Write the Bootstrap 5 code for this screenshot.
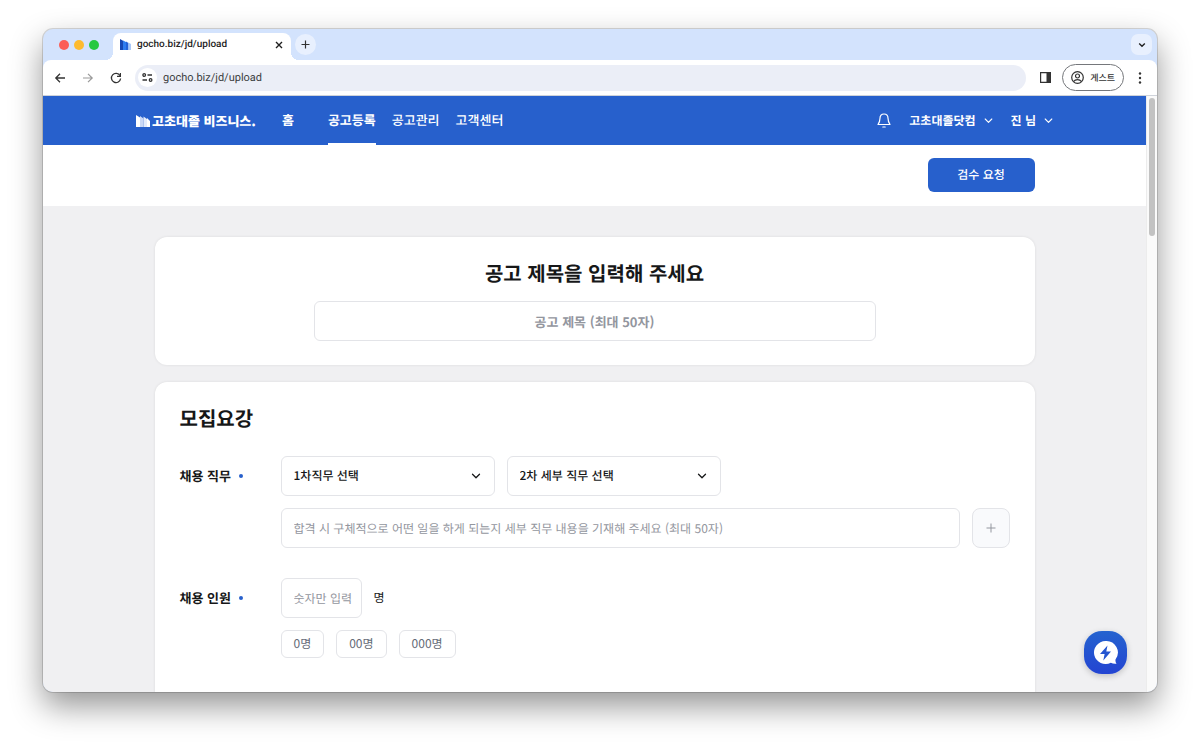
<!DOCTYPE html>
<html lang="ko">
<head>
  <meta charset="UTF-8" />
  <meta name="viewport" content="width=device-width, initial-scale=1.0"/>
  <title>고초대졸 비즈니스 - 공고등록</title>
  <link href="https://cdn.jsdelivr.net/npm/bootstrap@5.3.3/dist/css/bootstrap.min.css" rel="stylesheet" />
  <style>
    :root {
      --brand: #2760cc;
      --line: #e3e4e8;
      --hint: #93969e;
      --ink: #161718;
    }
    body {
      font-family: "Noto Sans CJK KR", sans-serif;
      font-size: 12px;
      line-height: 20px;
      color: var(--ink);
      background: #fff;
      padding: 29px 43px 57px;
      height: 100vh;
      overflow: hidden;
      text-rendering: geometricPrecision;
    }
    svg { display: block; flex: none; }
    button, input, select { line-height: inherit; text-rendering: inherit; }

    /* browser */
    .browser {
      height: 100%;
      border-radius: 10px;
      box-shadow: 0 0 0 1px rgba(0,0,0,.14), 0 14px 32px rgba(0,0,0,.42);
      background: #d3e3fd;
    }
    .tabs { height: 31px; padding: 0 5px 0 16px; }
    .dots { gap: 5px; margin-right: 14px; }
    .dot { width: 10px; height: 10px; border-radius: 50%; }
    .dot-red { background: #fb5d57; }
    .dot-yellow { background: #fdbb2f; }
    .dot-green { background: #27c840; }
    .tab {
      width: 178px;
      height: 27px;
      padding: 0 8px 4px 7px;
      background: #fff;
      border-radius: 8px 8px 0 0;
      font: 500 10px/16px Roboto, "Liberation Sans", sans-serif;
      color: #1f1f1f;
    }
    .tab .favicon { margin-right: 6px; }
    .tab::before, .tab::after {
      content: "";
      position: absolute;
      bottom: 0;
      width: 8px;
      height: 8px;
    }
    .tab::before { left: -8px; background: radial-gradient(circle at 0 0, transparent 8px, #fff 8px); }
    .tab::after { right: -8px; background: radial-gradient(circle at 100% 0, transparent 8px, #fff 8px); }
    .plain { border: 0; background: none; padding: 0; gap: 8px; font-weight: 700; }
    .round-btn {
      width: 21px;
      height: 21px;
      border-radius: 50%;
      background: #e8f0fe;
    }
    .round-btn.squared { border-radius: 7px; }
    .toolbar {
      height: 36px;
      padding: 0 12px 0 11px;
      background: #fff;
      border-radius: 8px 8px 0 0;
      border-bottom: 1px solid #cfd3da;
    }
    .address {
      height: 26px;
      border-radius: 13px;
      background: #ebeef7;
      padding-left: 3px;
      gap: 6px;
      margin: 0 14px 0 13px;
    }
    .address input {
      border: 0;
      background: none;
      padding: 0;
      outline: 0;
      font: 11px/16px Roboto, "Liberation Sans", sans-serif;
      color: #3c3e42;
    }
    .site-info { width: 19px; height: 19px; border-radius: 50%; background: #fff; }
    .guest {
      height: 27px;
      width: 62px;
      padding: 0 8px;
      margin: 0 11px;
      border: 1px solid #75777b;
      border-radius: 14px;
      background: #fff;
      font-size: 9px;
      font-weight: 500;
      color: #333;
    }
    .scroll-track { width: 11px; background: #fafafa; border-left: 1px solid #ececec; padding: 2px; }
    .scroll-thumb { width: 6px; height: 138px; border-radius: 3px; background: #c2c2c2; }

    /* site */
    .page { background: #f0f0f2; }
    .site-header { background: var(--brand); }
    .header-inner { max-width: 917px; height: 49px; }
    .site-header a, .site-header button { color: #fff; text-decoration: none; }
    .brand { font-size: 13px; font-weight: 900; gap: 2px; margin-right: 26px; }
    .menu { font-size: 13px; font-weight: 500; gap: 16px; }
    .menu a { line-height: 46px; border-bottom: 2px solid transparent; border-top: 1px solid transparent; }
    .menu a.home { margin-right: 18px; font-weight: 700; }
    .menu a.active { font-weight: 700; border-bottom-color: #fff; }
    .account { gap: 18px; font-weight: 700; }
    .action-bar { background: #fff; padding: 13px 0 14px; }
    .content-inner { max-width: 880px; }
    .panels { gap: 17px; padding-top: 31px; }
    .submit {
      width: 107px;
      height: 34px;
      border: 0;
      border-radius: 6px;
      background: var(--brand);
      color: #fff;
      font-weight: 500;
    }
    .panel {
      background: #fff;
      border-radius: 12px;
      padding: 24px 25px;
      box-shadow: 0 0 3px rgba(0,0,0,.09);
    }
    .panel h1, .panel h2 { font-size: 20px; line-height: 24px; font-weight: 700; margin: 0; }
    .panel h1 { margin-bottom: 16px; }
    .panel h2 { margin-bottom: 26px; }
    .panel h1 label { display: block; }
    .field {
      height: 40px;
      padding: 0 12px;
      border: 1px solid var(--line);
      border-radius: 6px;
      background-color: #fff;
      color: var(--ink);
      font-size: 12px;
      line-height: 20px;
    }
    .field::placeholder { color: var(--hint); opacity: 1; }
    .title-field { max-width: 562px; font-size: 13px; font-weight: 700; text-align: center; }
    .pick {
      width: 214px;
      font-weight: 500;
      background-size: 10px 10px;
      background-position: right 13px center;
      background-image: url("data:image/svg+xml,%3csvg xmlns='http://www.w3.org/2000/svg' viewBox='0 0 10 10'%3e%3cpath fill='none' stroke='%23161718' stroke-width='1.3' stroke-linecap='round' stroke-linejoin='round' d='M1.5 3.3l3.5 3.5 3.5-3.5'/%3e%3c/svg%3e");
    }
    .form-row { display: grid; grid-template-columns: 101px 1fr; margin-bottom: 30px; }
    .form-row > .row-title { height: 40px; gap: 8px; font-size: 13px; font-weight: 700; }
    .required { width: 4px; height: 4px; border-radius: 50%; background: var(--brand); }
    .fields { gap: 12px; }
    .add {
      width: 38px;
      height: 40px;
      border: 1px solid var(--line);
      border-radius: 8px;
      background: #f9fafc;
    }
    .count { width: 81px; padding-right: 0; }
    .pill {
      height: 28px;
      padding: 0 12px;
      border: 1px solid var(--line);
      border-radius: 6px;
      background: #fff;
      color: #666c78;
    }
    .chat {
      position: absolute;
      right: 30px;
      bottom: 18px;
      width: 43px;
      height: 43px;
      border: 0;
      border-radius: 18px;
      background: linear-gradient(#2563cf, #2344d2);
      box-shadow: 0 2px 6px rgba(0,0,0,.2);
    }
  </style>
</head>
<body>
  <div class="browser d-flex flex-column overflow-hidden position-relative">
    <div class="tabs d-flex flex-shrink-0 align-items-center">
      <div class="dots d-flex">
        <span class="dot dot-red"></span>
        <span class="dot dot-yellow"></span>
        <span class="dot dot-green"></span>
      </div>
      <div class="tab position-relative d-flex align-items-center align-self-end">
        <svg class="favicon" width="11" height="11" viewBox="0 0 11 11">
          <path fill="#1748b4" d="M0 0l3.500 2v9H0z"/>
          <path fill="#2f7df0" d="M3 1.500L6 3v8H3z"/>
          <path fill="#2563d8" d="M6 2.500l2.500 1.500V11H6z"/>
          <path fill="#a9c8f8" d="M8.500 3.500L11 5v6H8.500z"/>
        </svg>
        <span>gocho.biz/jd/upload</span>
        <button class="plain ms-auto" aria-label="탭 닫기">
          <svg width="8" height="8" viewBox="0 0 8 8"><path stroke="#1f1f1f" stroke-width="1.400" d="M1 1l6 6M7 1L1 7"/></svg>
        </button>
      </div>
      <button class="plain round-btn d-flex align-items-center justify-content-center ms-1" aria-label="새 탭">
        <svg width="9" height="9" viewBox="0 0 9 9"><path stroke="#333" stroke-width="1.200" d="M4.500 0.500v8M0.500 4.500h8"/></svg>
      </button>
      <button class="plain round-btn squared d-flex align-items-center justify-content-center ms-auto" aria-label="탭 검색">
        <svg width="8" height="8" viewBox="0 0 8 8"><path fill="none" stroke="#222" stroke-width="1.400" d="M1.200 2.500L4 5.300l2.800-2.800"/></svg>
      </button>
    </div>

    <div class="toolbar d-flex flex-shrink-0 align-items-center">
      <button class="plain" aria-label="뒤로">
        <svg width="12" height="12" viewBox="0 0 12 12"><path fill="none" stroke="#333" stroke-width="1.300" d="M11 6H2M6 1.800L1.800 6 6 10.200"/></svg>
      </button>
      <button class="plain ms-3" aria-label="앞으로">
        <svg width="12" height="12" viewBox="0 0 12 12"><path fill="none" stroke="#999" stroke-width="1.200" d="M1 6h9M6 1.800L10.200 6 6 10.200"/></svg>
      </button>
      <button class="plain ms-3" aria-label="새로고침">
        <svg width="12" height="12" viewBox="0 0 12 12"><path fill="none" stroke="#333" stroke-width="1.300" d="M10 3.600A4.600 4.600 0 1 0 10.600 6.500"/><path fill="#333" d="M11 1v4H7V3.800h2.800V1z"/></svg>
      </button>
      <div class="address flex-grow-1 d-flex align-items-center">
        <span class="site-info d-flex align-items-center justify-content-center">
          <svg width="11" height="9" viewBox="0 0 11 9" fill="none" stroke="#333" stroke-width="1.300"><circle cx="2.200" cy="2" r="1.300"/><path d="M5.500 2H10M0.500 7H5"/><circle cx="8.600" cy="7" r="1.300"/></svg>
        </span>
        <input type="text" class="flex-grow-1" value="gocho.biz/jd/upload" aria-label="주소">
      </div>
      <button class="plain" aria-label="사이드 패널">
        <svg width="11" height="11" viewBox="0 0 11 11"><path fill="none" stroke="#333" stroke-width="1.200" d="M.6.600h9.800v9.800H.6z"/><path fill="#333" d="M6.500.600h4v9.800h-4z"/></svg>
      </button>
      <button class="guest d-flex align-items-center justify-content-between">
        <svg width="13" height="13" viewBox="0 0 13 13" fill="none" stroke="#333" stroke-width="1.200"><circle cx="6.500" cy="6.500" r="5.800"/><circle cx="6.500" cy="5" r="2"/><path d="M2.600 10.500c1.800-2.400 6-2.400 7.800 0"/></svg>
        게스트
      </button>
      <button class="plain" aria-label="메뉴">
        <svg width="10" height="12" viewBox="0 0 10 12" fill="#333"><circle cx="5" cy="1.500" r="1.200"/><circle cx="5" cy="6" r="1.200"/><circle cx="5" cy="10.500" r="1.200"/></svg>
      </button>
    </div>

    <div class="d-flex flex-grow-1 overflow-hidden">
      <div class="page flex-grow-1 overflow-hidden">
        <header class="site-header">
          <div class="header-inner mx-auto d-flex align-items-center">
            <a href="#" class="brand d-flex align-items-center">
              <svg width="14" height="12" viewBox="0 0 14 12">
                <path fill="#fff" d="M0 0l4 2.500V12H0z"/>
                <path fill="#c9d8f6" d="M4 1l3.500 2.500V12H4z"/>
                <path fill="#e3ebfb" d="M7.500 1.500L11 4v8H7.500z"/>
                <path fill="#fff" d="M11 3l3 3v6h-3z"/>
              </svg>
              고초대졸 비즈니스.
            </a>
            <nav class="menu d-flex">
              <a href="#" class="home">홈</a>
              <a href="#" class="active">공고등록</a>
              <a href="#">공고관리</a>
              <a href="#">고객센터</a>
            </nav>
            <div class="account d-flex align-items-center ms-auto">
              <button class="plain" aria-label="알림">
                <svg width="14" height="15" viewBox="0 0 14 15" fill="none" stroke="#fff" stroke-width="1.200" stroke-linejoin="round" stroke-linecap="round"><path d="M7 1C4.500 1 3 2.800 3 5.200c0 3-.6 4.200-2 6.300h12c-1.400-2.100-2-3.300-2-6.300C11 2.800 9.500 1 7 1z"/><path d="M5.800 14h2.400"/></svg>
              </button>
              <button class="plain d-flex align-items-center">고초대졸닷컴
                <svg width="9" height="9" viewBox="0 0 9 9"><path fill="none" stroke="#fff" stroke-width="1.100" stroke-linecap="round" stroke-linejoin="round" d="M1.200 3l3.300 3.300L7.800 3"/></svg>
              </button>
              <button class="plain d-flex align-items-center">진 님
                <svg width="9" height="9" viewBox="0 0 9 9"><path fill="none" stroke="#fff" stroke-width="1.100" stroke-linecap="round" stroke-linejoin="round" d="M1.200 3l3.300 3.300L7.800 3"/></svg>
              </button>
            </div>
          </div>
        </header>

        <div class="action-bar">
          <div class="content-inner mx-auto d-flex justify-content-end">
            <button class="submit">검수 요청</button>
          </div>
        </div>

        <main class="content-inner panels mx-auto d-flex flex-column">
          <section class="panel text-center">
            <h1><label for="jobTitle">공고 제목을 입력해 주세요</label></h1>
            <input type="text" id="jobTitle" class="field title-field form-control mx-auto" placeholder="공고 제목 (최대 50자)">
          </section>

          <section class="panel">
            <h2>모집요강</h2>
            <div class="form-row">
              <label for="task1" class="row-title d-flex align-items-center">채용 직무 <span class="required"></span></label>
              <div class="fields d-flex flex-column">
                <div class="fields d-flex">
                  <select id="task1" class="field pick form-select"><option>1차직무 선택</option></select>
                  <select class="field pick form-select" aria-label="2차 직무"><option>2차 세부 직무 선택</option></select>
                </div>
                <div class="fields d-flex">
                  <input type="text" class="field form-control" aria-label="세부 직무 내용" placeholder="합격 시 구체적으로 어떤 일을 하게 되는지 세부 직무 내용을 기재해 주세요 (최대 50자)">
                  <button class="add d-flex flex-shrink-0 align-items-center justify-content-center p-0" aria-label="추가">
                    <svg width="10" height="10" viewBox="0 0 10 10"><path stroke="#93969e" d="M5 .5v9M.5 5h9"/></svg>
                  </button>
                </div>
              </div>
            </div>
            <div class="form-row">
              <label for="people" class="row-title d-flex align-items-center">채용 인원 <span class="required"></span></label>
              <div class="fields d-flex flex-column">
                <div class="fields d-flex align-items-center">
                  <input type="text" id="people" class="field count form-control" placeholder="숫자만 입력">
                  <span>명</span>
                </div>
                <div class="fields d-flex">
                  <button class="pill">0명</button>
                  <button class="pill">00명</button>
                  <button class="pill">000명</button>
                </div>
              </div>
            </div>
          </section>
        </main>
      </div>
      <div class="scroll-track flex-shrink-0"><div class="scroll-thumb"></div></div>
    </div>

    <button class="chat d-flex align-items-center justify-content-center p-0" aria-label="상담">
      <svg width="25" height="25" viewBox="0 0 25 25">
        <path fill="#fff" d="M12.500 1a11.500 11.500 0 1 0 5.300 21.700c1.600.9 3.500 1.200 5.700 1-.9-1.100-1.200-2.600-1-4.300A11.500 11.500 0 0 0 12.500 1z"/>
        <path fill="#2455d0" d="M14.500 5.500L7 14h4.600l-1.300 6.500L18 11.500h-4.700z"/>
      </svg>
    </button>
  </div>

  <script src="https://cdn.jsdelivr.net/npm/bootstrap@5.3.3/dist/js/bootstrap.bundle.min.js"></script>
</body>
</html>
